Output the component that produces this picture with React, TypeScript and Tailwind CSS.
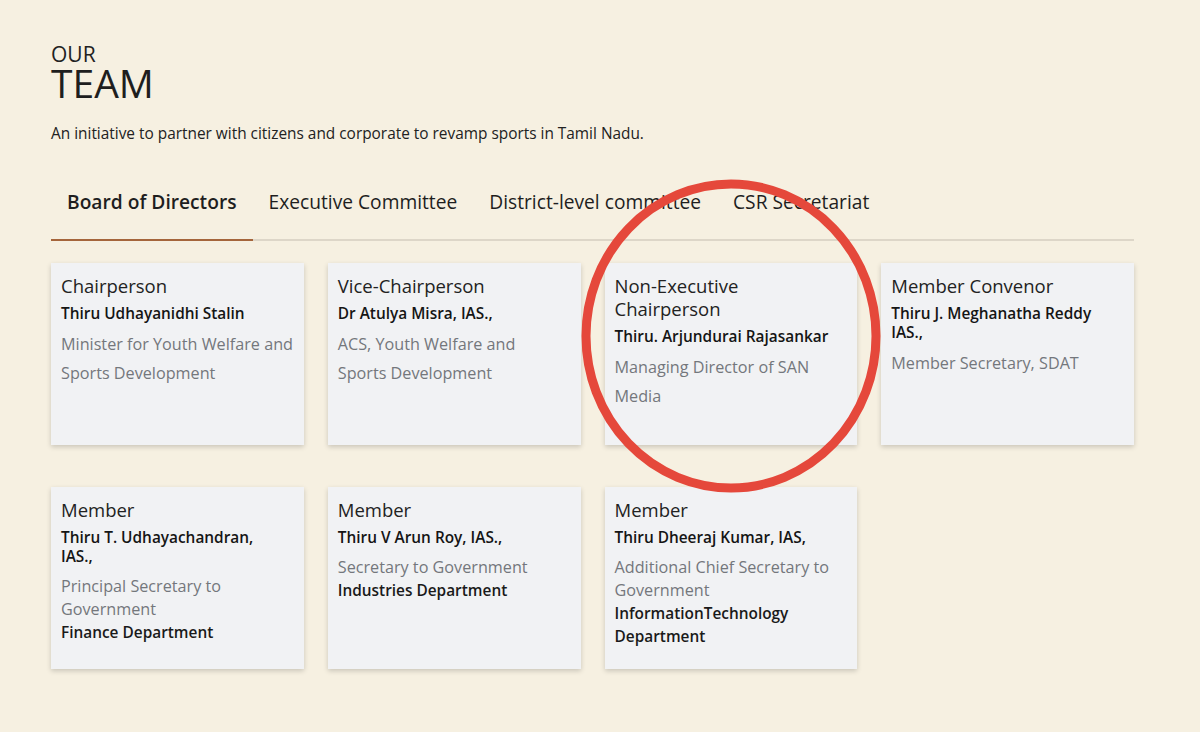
const tabs = ["Board of Directors", "Executive Committee", "District-level committee", "CSR Secretariat"];

type Member = {
  role: string;
  name: string;
  desc: string[];
  dept?: string;
  tight?: boolean;
};

const members: Member[] = [
  { role: "Chairperson", name: "Thiru Udhayanidhi Stalin", desc: ["Minister for Youth Welfare and", "Sports Development"] },
  { role: "Vice-Chairperson", name: "Dr Atulya Misra, IAS.,", desc: ["ACS, Youth Welfare and", "Sports Development"] },
  { role: "Non-Executive Chairperson", name: "Thiru. Arjundurai Rajasankar", desc: ["Managing Director of SAN", "Media"] },
  { role: "Member Convenor", name: "Thiru J. Meghanatha Reddy IAS.,", desc: ["Member Secretary, SDAT"] },
  { role: "Member", name: "Thiru T. Udhayachandran, IAS.,", desc: ["Principal Secretary to", "Government"], dept: "Finance Department", tight: true },
  { role: "Member", name: "Thiru V Arun Roy, IAS.,", desc: ["Secretary to Government"], dept: "Industries Department", tight: true },
  { role: "Member", name: "Thiru Dheeraj Kumar, IAS,", desc: ["Additional Chief Secretary to", "Government"], dept: "InformationTechnology Department", tight: true },
];

function MemberCard({ m }: { m: Member }) {
  return (
    <div className="h-[182px] bg-[#f1f2f4] px-[10px] pt-[11px] shadow-[0_2px_5px_rgba(0,0,0,0.18)]">
      <p className="pr-4 text-[18.5px] leading-[23px] text-[#222]">{m.role}</p>
      <p className="mt-[7px] pr-4 text-[15.4px] font-semibold leading-[19px] text-[#151515]">{m.name}</p>
      {m.tight ? (
        <>
          <p className="mt-[9px] whitespace-nowrap text-[16.2px] leading-[23px] text-[#74777c]">
            {m.desc.map((l) => (
              <span key={l} className="block">{l}</span>
            ))}
          </p>
          <p className="pr-8 text-[15.4px] font-semibold leading-[23px] text-[#1a1a1a]">{m.dept}</p>
        </>
      ) : (
        <p className="mt-[7px] whitespace-nowrap text-[16.2px] leading-[29px] text-[#74777c]">
          {m.desc.map((l) => (
            <span key={l} className="block">{l}</span>
          ))}
        </p>
      )}
    </div>
  );
}

export default function App() {
  return (
    <div
      className="relative min-h-[732px] bg-[#f6f0e1] px-[51px] pt-[43px] text-[#1f1f1f]"
      style={{ fontFamily: "'Open Sans', Lato, sans-serif" }}
    >
      <h2>
        <span className="block text-[21px] leading-[22px] text-[#222]">OUR</span>
        <span className="block text-[39px] leading-[36px] text-[#1e1e1e]">TEAM</span>
      </h2>
      <p className="mt-[22px] text-[15.4px] leading-[21px] text-[#222]">
        An initiative to partner with citizens and corporate to revamp sports in Tamil Nadu.
      </p>

      <div className="mt-[45px] flex w-[1083px] border-b-2 border-[#ddd6c8]">
        {tabs.map((t, i) => (
          <div
            key={t}
            className={
              i === 0
                ? "-mb-[2px] border-b-2 border-[#a5653b] px-4 pb-[24px] text-[19.2px] leading-[26px] font-semibold text-[#1e1e1e]"
                : "px-4 pb-[24px] text-[19.2px] leading-[26px] text-[#1e1e1e]"
            }
          >
            {t}
          </div>
        ))}
      </div>

      <div className="mt-[22px] grid w-[1083px] grid-cols-4 gap-x-[24px] gap-y-[42px]">
        {members.map((m, i) => (
          <MemberCard key={i} m={m} />
        ))}
      </div>

      <svg className="pointer-events-none absolute left-0 top-0" width="1200" height="732">
        <ellipse cx="731" cy="336" rx="145" ry="152" fill="none" stroke="#e5483b" strokeWidth="9" />
      </svg>
    </div>
  );
}
